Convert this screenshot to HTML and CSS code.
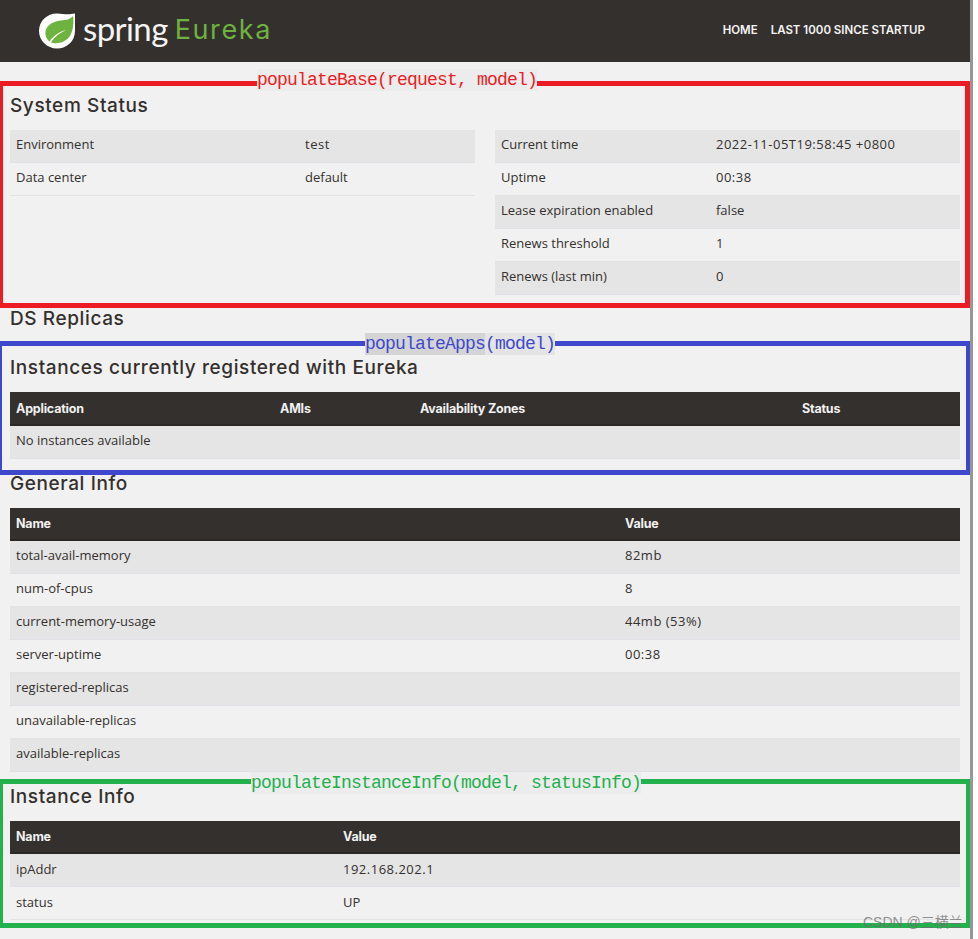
FILE: index.html
```html
<!DOCTYPE html>
<html lang="en">
<head>
<meta charset="utf-8">
<title>Eureka</title>
<link rel="stylesheet" href="styles.css">
</head>
<body>
<div class="page">
  <header class="topbar">
    <div class="brand">
      <svg class="leaf" width="36" height="36" viewBox="0 0 36 36" aria-hidden="true">
        <path d="M18 0.5 C23 0.5 28 2 32 1 L36 0.5 C37 8 36.5 14 36 18 C36 28 28 35.5 18 35.5 C8 35.5 0 27.5 0 18 C0 8 8 0.5 18 0.5 Z" fill="#fff"/>
        <path d="M34 3 C31 6.5 27.5 7 22 7.5 C12.5 8.5 5.5 13.5 6.5 22 C7 25 8.5 27 10.5 28.5 C14 23 20 19 27 17 C21 20 15 24 12 29.5 C18 31.5 27.5 29.5 31.5 22 C34 17 35 10 34 3 Z" fill="#6db33f"/>
      </svg>
      <span class="word-spring">spring</span>
      <span class="word-eureka">Eureka</span>
    </div>
    <nav class="nav"><a>HOME</a><a>LAST 1000 SINCE STARTUP</a></nav>
  </header>

  <main class="content">
    <h2 class="title first">System Status</h2>
    <div class="two-col">
      <div class="tbl cols-status-l">
        <div class="row odd"><span>Environment</span><span class="num">test</span></div>
        <div class="row"><span>Data center</span><span>default</span></div>
      </div>
      <div class="tbl cols-status-r">
        <div class="row odd"><span>Current time</span><span class="num">2022-11-05T19:58:45 +0800</span></div>
        <div class="row"><span>Uptime</span><span class="num">00:38</span></div>
        <div class="row odd"><span>Lease expiration enabled</span><span>false</span></div>
        <div class="row"><span>Renews threshold</span><span>1</span></div>
        <div class="row odd"><span>Renews (last min)</span><span>0</span></div>
      </div>
    </div>

    <h2 class="title ds">DS Replicas</h2>

    <h2 class="title inst">Instances currently registered with Eureka</h2>
    <div class="tbl cols-apps">
      <div class="row head"><span>Application</span><span>AMIs</span><span>Availability Zones</span><span>Status</span></div>
      <div class="row odd"><span>No instances available</span></div>
    </div>

    <h2 class="title gen">General Info</h2>
    <div class="tbl cols-general">
      <div class="row head"><span>Name</span><span>Value</span></div>
      <div class="row odd"><span>total-avail-memory</span><span class="num">82mb</span></div>
      <div class="row"><span>num-of-cpus</span><span>8</span></div>
      <div class="row odd"><span>current-memory-usage</span><span class="num">44mb (53%)</span></div>
      <div class="row"><span>server-uptime</span><span class="num">00:38</span></div>
      <div class="row odd"><span>registered-replicas</span><span></span></div>
      <div class="row"><span>unavailable-replicas</span><span></span></div>
      <div class="row odd"><span>available-replicas</span><span></span></div>
    </div>

    <h2 class="title info">Instance Info</h2>
    <div class="tbl cols-inst">
      <div class="row head"><span>Name</span><span>Value</span></div>
      <div class="row odd"><span>ipAddr</span><span class="num">192.168.202.1</span></div>
      <div class="row"><span>status</span><span>UP</span></div>
    </div>
  </main>

  <div class="frame frame-red"></div>
  <div class="label label-red">populateBase(request, model)</div>
  <div class="frame frame-blue"></div>
  <div class="label label-blue"><span class="hl">populateApps</span>(model)</div>
  <div class="frame frame-green"></div>
  <div class="label label-green">populateInstanceInfo(model, statusInfo)</div>
  <div class="watermark">CSDN @三横兰</div>
</div>
</body>
</html>
```
FILE: styles.css
```css
* { box-sizing: border-box; }
html, body { margin: 0; padding: 0; background: #fff; }
body { width: 978px; height: 939px; overflow: hidden; }
.page {
  position: relative;
  width: 973px;
  height: 939px;
  background: #f1f1f1;
  border-right: 3px solid #979797;
  font-family: "Open Sans", "Noto Sans", sans-serif;
  font-size: 13px;
  color: #34302d;
  overflow: hidden;
}
.topbar {
  height: 62px;
  background: #34302d;
  display: flex;
  align-items: center;
  justify-content: space-between;
  padding: 0 45px 0 39px;
}
.brand { display: flex; align-items: center; }
.leaf { display: block; margin-right: 8px; }
.word-spring { font-family: "Lato", sans-serif; font-size: 33px; line-height: 36px; padding-bottom: 6px; color: #f4f4f4; letter-spacing: -0.6px; margin-right: 7px; }
.word-eureka { font-family: "Inter", sans-serif; font-size: 27px; line-height: 36px; padding-bottom: 2px; color: #6db33f; letter-spacing: 1.6px; }
.nav { display: flex; gap: 13px; padding-bottom: 2px; font-family: "Inter", sans-serif; font-size: 11.5px; font-weight: 600; color: #f4f4f4; }
.content { padding: 0 10px; }
.title {
  margin: 0;
  padding-top: 1px;
  font-family: "Inter", sans-serif;
  font-weight: 500;
  font-size: 19px;
  line-height: 24px;
  letter-spacing: 0.6px;
  color: #34302d;
}
.title.first { padding-top: 32px; margin-bottom: 12px; }
.title.ds { margin-top: 11px; }
.title.inst { margin-top: 24px; margin-bottom: 12px; }
.title.gen { margin-top: 12px; margin-bottom: 12px; }
.title.info { margin-top: 12px; margin-bottom: 12px; }
.two-col { display: grid; grid-template-columns: 465px 465px; column-gap: 20px; }
.tbl { width: 100%; }
.row {
  display: grid;
  height: 33px;
  align-items: center;
  border-bottom: 1px solid #e3e3e3;
}
.row > span { padding-left: 6px; padding-bottom: 4px; }
.row > .num { letter-spacing: 0.5px; }
.row.odd { background: #e5e5e5; border-bottom-color: #e0e0e6; }
.row.head {
  background: #34302d;
  color: #f1f1f1;
  font-family: "Inter", sans-serif;
  font-weight: 700;
  font-size: 12.5px;
  border-bottom: 2px solid #2b2724;
  letter-spacing: -0.2px;
}
.row.head > span { padding-bottom: 0; }
.cols-status-l .row { grid-template-columns: 289px 1fr; }
.cols-status-r .row { grid-template-columns: 215px 1fr; }
.cols-apps .row { grid-template-columns: 264px 140px 382px 1fr; }
.cols-apps .row.head { height: 34px; }
.cols-general .row { grid-template-columns: 609px 1fr; }
.cols-inst .row { grid-template-columns: 327px 1fr; }
.cols-inst .row:not(.head) > span { padding-bottom: 2px; }
.cols-apps .row:not(.head) { display: flex; }

.frame { position: absolute; border-style: solid; border-width: 5px; pointer-events: none; }
.frame-red { left: -2px; top: 81px; width: 972px; height: 227px; border-color: #ed1c24; }
.frame-blue { left: -3px; top: 341px; width: 974px; height: 134px; border-color: #3f48cc; }
.frame-green { left: -2px; top: 779px; width: 973px; height: 149px; border-color: #22b14c; }
.label {
  position: absolute;
  height: 22px;
  line-height: 23px;
  font-family: "Liberation Mono", monospace;
  font-size: 18px;
  letter-spacing: -0.8px;
  background: #ececec;
  white-space: nowrap;
}
.label-red { left: 257px; top: 69px; color: #ed1c24; }
.label-blue { left: 365px; top: 333px; color: #3f48cc; background: #e4e4e4; }
.label-blue .hl { background: #d4d4d4; display: inline-block; height: 22px; }
.label-green { left: 251px; top: 772px; color: #22b14c; }
.watermark {
  position: absolute;
  left: 863px;
  top: 913px;
  font-family: "Liberation Sans", "Noto Sans CJK SC", sans-serif;
  font-size: 14px;
  line-height: 18px;
  color: rgba(110, 110, 110, 0.75);
  white-space: nowrap;
}
```
